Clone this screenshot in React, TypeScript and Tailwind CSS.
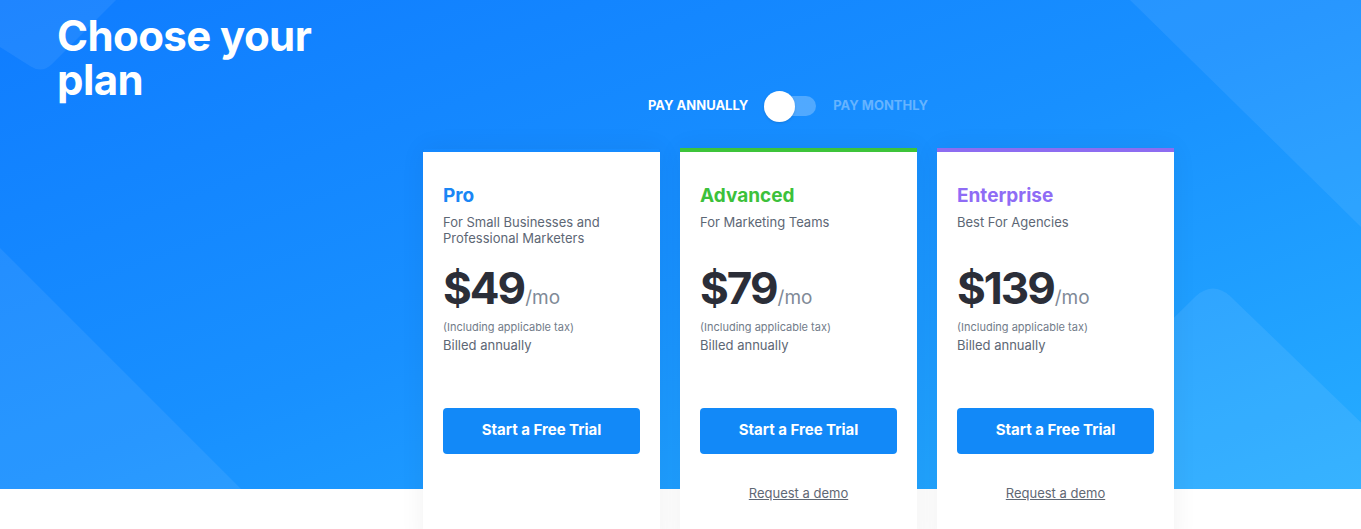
import React from "react";

type Plan = {
  name: string;
  nameColor: string;
  borderColor: string;
  subtitle: string[];
  price: string;
  demo: boolean;
};

const plans: Plan[] = [
  {
    name: "Pro",
    nameColor: "text-[#1a86f5]",
    borderColor: "border-t-transparent",
    subtitle: ["For Small Businesses and", "Professional Marketers"],
    price: "$49",
    demo: false,
  },
  {
    name: "Advanced",
    nameColor: "text-[#3cc13b]",
    borderColor: "border-t-[#3ec43a]",
    subtitle: ["For Marketing Teams"],
    price: "$79",
    demo: true,
  },
  {
    name: "Enterprise",
    nameColor: "text-[#8f6cf5]",
    borderColor: "border-t-[#8d6cf1]",
    subtitle: ["Best For Agencies"],
    price: "$139",
    demo: true,
  },
];

function Decorations() {
  return (
    <svg
      className="absolute inset-0 h-full w-full"
      viewBox="0 0 1361 489"
      preserveAspectRatio="none"
      aria-hidden="true"
    >
      <path d="M0 0 H116 L52 64 Q42 74 30 66 L0 47 Z" fill="rgba(255,255,255,0.07)" />
      <path d="M0 248 L241 489 H0 Z" fill="rgba(255,255,255,0.07)" />
      <path d="M1130 0 L1361 227 V0 Z" fill="rgba(255,255,255,0.07)" />
      <path
        d="M1000 489 L1196 296 Q1213 281 1230 296 L1430 489 Z"
        fill="rgba(255,255,255,0.08)"
      />
    </svg>
  );
}

function Card({ plan }: { plan: Plan }) {
  return (
    <div
      className={`flex h-[400px] w-[237px] flex-col border-t-4 bg-white bg-clip-padding px-5 pt-8 shadow-[0_0_24px_rgba(0,0,0,0.06)] ${plan.borderColor}`}
    >
      <div className={`text-[19px] font-bold leading-6 ${plan.nameColor}`}>{plan.name}</div>
      <div className="mt-[6px] h-[32px] text-[13px] leading-4 text-[#5d6775]">
        {plan.subtitle.map((s) => (
          <div key={s}>{s}</div>
        ))}
      </div>
      <div className="mt-[18px] flex items-baseline">
        <span className="text-[44px] font-bold leading-[48px] tracking-[-2px] text-[#2b2e38]">
          {plan.price}
        </span>
        <span className="ml-[1px] text-[19px] text-[#7f8a97]">/mo</span>
      </div>
      <div className="mt-[6px] text-[11px] leading-[16px] text-[#727c89]">
        (Including applicable tax)
      </div>
      <div className="mt-[1px] text-[13px] leading-[18px] text-[#5d6775]">Billed annually</div>
      <button className="mt-[54px] h-[46px] w-full rounded-[4px] bg-[#1289f8] text-[15px] font-bold text-white">
        Start a Free Trial
      </button>
      {plan.demo && (
        <div className="mt-[31px] text-center text-[13px] leading-4">
          <a className="text-[#5f6874] underline">Request a demo</a>
        </div>
      )}
    </div>
  );
}

export default function App() {
  return (
    <div
      className="h-[529px] w-full overflow-hidden bg-white"
      style={{ fontFamily: "Inter, 'Open Sans', sans-serif" }}
    >
      <section className="relative h-[489px] bg-[linear-gradient(160deg,#0f7cff_0%,#1890ff_50%,#26adff_100%)]">
        <Decorations />
        <div className="relative z-10 flex pl-[57px]">
          <div className="w-[366px] pt-[14px]">
            <h1 className="text-[42px] font-bold leading-[44px] tracking-[-0.6px] text-white">
              Choose your
              <br />
              plan
            </h1>
          </div>
          <div className="flex flex-col pt-[90px]">
            <div className="flex h-[32px] items-center pl-[225px]">
              <span className="text-[13px] font-bold text-white">PAY ANNUALLY</span>
              <div className="ml-4 flex h-[20px] w-[52px] items-center rounded-full bg-white/25">
                <div className="h-[31px] w-[31px] rounded-full bg-white shadow-sm" />
              </div>
              <span className="ml-[17px] text-[13px] font-bold text-white/35">PAY MONTHLY</span>
            </div>
            <div className="mt-[26px] flex gap-5">
              {plans.map((p) => (
                <Card key={p.name} plan={p} />
              ))}
            </div>
          </div>
        </div>
      </section>
    </div>
  );
}
